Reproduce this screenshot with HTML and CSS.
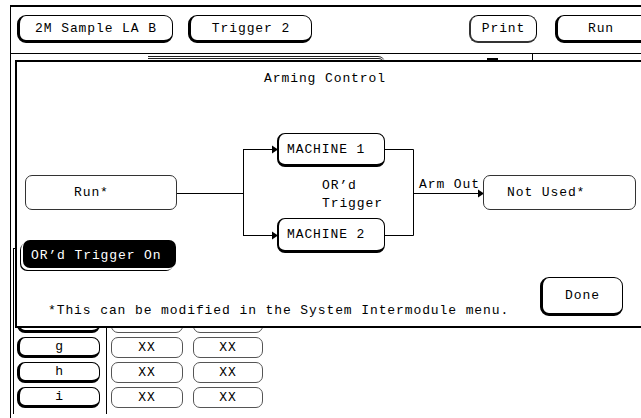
FILE: index.html
```html
<!DOCTYPE html>
<html>
<head>
<meta charset="utf-8">
<link rel="stylesheet" href="styles.css">
</head>
<body>
<div class="screen">
  <div class="frame">
    <div class="topbar">
      <div class="btn btn-wide">2M Sample LA B</div>
      <div class="btn btn-trig">Trigger 2</div>
      <div class="btn btn-print">Print</div>
      <div class="btn btn-run">Run</div>
    </div>
    <div class="subbar">
      <div class="hidden-tab"></div>
      <div class="bump"></div>
      <div class="divider"></div>
    </div>
    <div class="list">
      <div class="letters">
        <div class="lbtn"></div>
        <div class="lbtn"></div>
        <div class="lbtn"></div>
        <div class="lbtn">g</div>
        <div class="lbtn">h</div>
        <div class="lbtn">i</div>
      </div>
      <div class="vals">
        <div class="vrow"><div class="xx"></div><div class="xx xx2"></div></div>
        <div class="vrow"><div class="xx"></div><div class="xx xx2"></div></div>
        <div class="vrow"><div class="xx"></div><div class="xx xx2"></div></div>
        <div class="vrow"><div class="xx">XX</div><div class="xx xx2">XX</div></div>
        <div class="vrow"><div class="xx">XX</div><div class="xx xx2">XX</div></div>
        <div class="vrow"><div class="xx">XX</div><div class="xx xx2">XX</div></div>
      </div>
    </div>
  </div>

  <div class="dialog">
    <div class="dlg-title">Arming Control</div>
    <div class="canvas">
      <svg class="wires" width="624" height="147" viewBox="0 0 624 147">
        <g stroke="#000" stroke-width="1" fill="none">
          <path d="M160 65.5 H226.5"/>
          <path d="M226.5 21 V108"/>
          <path d="M226 21.5 H256"/>
          <path d="M226 107.5 H256"/>
          <path d="M368 21.5 H396.5 V107.5 H368"/>
          <path d="M396 65.5 H462"/>
        </g>
        <g fill="#000">
          <polygon points="255,17.5 261,21.5 255,25.5"/>
          <polygon points="255,103.5 261,107.5 255,111.5"/>
          <polygon points="461,61.5 467,65.5 461,69.5"/>
        </g>
      </svg>
      <div class="node mach m1">MACHINE 1</div>
      <div class="node mach m2">MACHINE 2</div>
      <div class="node plain run">Run*</div>
      <div class="node plain notused">Not Used*</div>
      <div class="label armout">Arm Out</div>
      <div class="label ord">OR’d</div>
      <div class="label trig">Trigger</div>
      <div class="node ortrig">OR’d Trigger On</div>
    </div>
    <div class="footer">
      <div class="note">*This can be modified in the System Intermodule menu.</div>
      <div class="btn done">Done</div>
    </div>
  </div>
</div>
</body>
</html>
```

FILE: styles.css
```css
html, body {
  margin: 0;
  background: #fff;
}

body {
  font-family: "Liberation Mono", "DejaVu Sans Mono", monospace;
  font-size: 13px;
  line-height: 17px;
  letter-spacing: 0.9px;
  color: #000;
}

.screen {
  position: relative;
  width: 641px;
  height: 418px;
  overflow: hidden;
  background: #fff;
}

.frame {
  margin: 5px 0 0 10px;
  height: 413px;
  box-sizing: border-box;
  border-top: 2px solid #000;
  border-left: 1px solid #000;
}

/* top soft-key bar */
.topbar {
  display: flex;
  height: 47px;
  box-sizing: border-box;
  padding: 8px 0 0 6px;
  border-bottom: 1px solid #000;
}

.btn {
  display: flex;
  align-items: center;
  justify-content: center;
  box-sizing: border-box;
  height: 28px;
  flex-shrink: 0;
  border: 1px solid #000;
  border-left-width: 3px;
  border-bottom-width: 3px;
  border-radius: 9px;
  background: #fff;
  white-space: pre;
}

.btn-wide { width: 156px; }
.btn-trig { width: 124px; margin-left: 15px; }
.btn-print {
  width: 68px;
  margin-left: 157px;
  border-left-width: 2px;
  border-bottom-width: 2px;
  border-left-color: #333;
  border-bottom-color: #333;
}
.btn-run { width: 96px; margin-left: 18px; padding-right: 6px; }

/* fragments of the menu hidden under the dialog */
.subbar {
  display: flex;
  align-items: flex-start;
  height: 6px;
}

.hidden-tab {
  flex-shrink: 0;
  margin: 2px 0 0 137px;
  width: 237px;
  height: 8px;
  border-top: 3px double #222;
  border-right: 1px solid #222;
  border-radius: 0 7px 0 0;
  box-sizing: border-box;
}

.bump {
  flex-shrink: 0;
  margin: 4px 0 0 102px;
  width: 11px;
  height: 2px;
  background: #000;
}

.divider {
  flex-shrink: 0;
  margin-left: 34px;
  width: 1px;
  height: 6px;
  background: #000;
}

/* label / value list */
.list {
  display: flex;
  align-items: flex-start;
  margin: 188px 0 0 2px;
}

.letters {
  display: flex;
  flex-direction: column;
  gap: 4px;
  width: 94px;
  box-sizing: border-box;
  border: 1px solid #000;
  border-bottom: none;
  padding: 13px 0 6px 3px;
}

.lbtn {
  display: flex;
  align-items: center;
  justify-content: center;
  width: 83px;
  height: 21px;
  box-sizing: border-box;
  border: 1px solid #000;
  border-left-width: 3px;
  border-bottom-width: 3px;
  border-radius: 8px;
  line-height: 14px;
}

.vals {
  display: flex;
  flex-direction: column;
  gap: 4px;
  margin-left: 4px;
  padding-top: 14px;
}

.vrow {
  display: flex;
  gap: 10px;
}

.xx {
  display: flex;
  align-items: center;
  justify-content: center;
  width: 72px;
  height: 21px;
  box-sizing: border-box;
  border: 1px solid #555;
  border-radius: 7px;
  line-height: 14px;
}

.xx2 { width: 70px; }

/* Arming Control dialog */
.dialog {
  position: absolute;
  left: 15px;
  top: 60px;
  width: 640px;
  height: 268px;
  box-sizing: border-box;
  display: flex;
  flex-direction: column;
  background: #fff;
  border-top: 2px solid #000;
  border-left: 2px solid #000;
  border-bottom: 2px solid #000;
}

.dlg-title {
  width: 616px;
  margin-top: 8px;
  text-align: center;
}

.canvas {
  position: relative;
  margin-top: 41px;
  width: 624px;
  height: 147px;
  flex-shrink: 0;
}

.wires {
  position: absolute;
  left: 0;
  top: 0;
}

.node {
  position: absolute;
  display: flex;
  align-items: center;
  box-sizing: border-box;
  white-space: pre;
}

.mach {
  left: 260px;
  width: 108px;
  padding-left: 8px;
  border: 1px solid #000;
  border-left-width: 2px;
  border-bottom-width: 3px;
  border-radius: 8px;
  background: #fff;
}

.m1 { top: 5px; height: 34px; }
.m2 { top: 90px; height: 35px; }

.plain {
  top: 47px;
  height: 35px;
  border: 1px solid #333;
  border-radius: 7px;
  background: #fff;
}

.run { left: 8px; width: 152px; padding-left: 48px; }
.notused { left: 466px; width: 153px; padding-left: 23px; }

.label {
  position: absolute;
  white-space: pre;
}

.armout { left: 402px; top: 48px; }
.ord { left: 305px; top: 49px; }
.trig { left: 305px; top: 67px; }

.ortrig {
  left: 6px;
  top: 112px;
  width: 153px;
  height: 28px;
  padding: 3px 0 0 8px;
  background: #000;
  color: #fff;
  border-radius: 7px;
  box-shadow: -2px 2px 0 0 #fff, -3px 3px 0 0 #000;
}

.footer {
  flex: 1;
  display: flex;
  align-items: flex-end;
  padding: 0 32px 0 31px;
}

.note {
  margin-bottom: 7px;
  white-space: pre;
}

.done {
  margin-left: auto;
  margin-bottom: 10px;
  width: 83px;
  height: 39px;
}
```
